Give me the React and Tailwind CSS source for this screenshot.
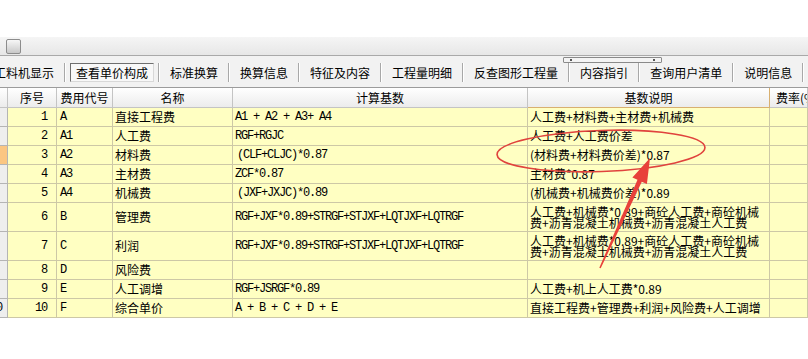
import React from "react";

const CJK = "font-['Noto_Sans_CJK_SC',sans-serif]";
const MONO = "font-['Liberation_Mono','Noto_Sans_CJK_SC',monospace] text-[12px] tracking-[-1.2px]";
const GRID = "grid grid-cols-[8px_49px_56px_120px_295px_242px_38px]";

const LONG_BASE = "RGF+JXF*0.89+STRGF+STJXF+LQTJXF+LQTRGF";
const LONG_DESC = ["人工费+机械费*0.89+商砼人工费+商砼机械", "费+沥青混凝土机械费+沥青混凝土人工费"];

const rows = [
  { n: "1", code: "A", name: "直接工程费", base: "A1 + A2 + A3+ A4", desc: "人工费+材料费+主材费+机械费" },
  { n: "2", code: "A1", name: "人工费", base: "RGF+RGJC", desc: "人工费+人工费价差" },
  { n: "3", code: "A2", name: "材料费", base: "(CLF+CLJC)*0.87", desc: "(材料费+材料费价差)*0.87", sel: true, indent: true },
  { n: "4", code: "A3", name: "主材费", base: "ZCF*0.87", desc: "主材费*0.87" },
  { n: "5", code: "A4", name: "机械费", base: "(JXF+JXJC)*0.89", desc: "(机械费+机械费价差)*0.89", indent: true },
  { n: "6", code: "B", name: "管理费", base: LONG_BASE, desc: LONG_DESC, tall: true },
  { n: "7", code: "C", name: "利润", base: LONG_BASE, desc: LONG_DESC, tall: true },
  { n: "8", code: "D", name: "风险费", base: "", desc: "" },
  { n: "9", code: "E", name: "人工调增", base: "RGF+JSRGF*0.89", desc: "人工费+机上人工费*0.89" },
  { n: "10", code: "F", name: "综合单价", base: "A + B + C + D + E", desc: "直接工程费+管理费+利润+风险费+人工调增", last: true },
];

const tools = ["工料机显示", "查看单价构成", "标准换算", "换算信息", "特征及内容", "工程量明细", "反查图形工程量", "内容指引", "查询用户清单", "说明信息"];

function Sep() {
  return <div className="h-[19px] w-[2px] border-l border-l-[#a8a8a8] border-r border-r-white shrink-0" />;
}

function Toolbar() {
  return (
    <div className={`relative h-[32px] bg-[#f2f2f2] border-b border-[#9c9c9c] flex items-center overflow-hidden ${CJK} text-[12px] text-black`}>
      <div className="flex items-center ml-[-16px] pt-[2px]">
        {tools.map((t, i) => (
          <React.Fragment key={t}>
            {i === 1 ? (
              <div className="mx-[4px] shrink-0 h-[19px] px-[5px] flex items-center border border-t-[#6e6e6e] border-l-[#6e6e6e] border-b-[#d8d8d8] border-r-[#d8d8d8] bg-[#f8f8f8] leading-none whitespace-nowrap">
                {t}
              </div>
            ) : (
              <div className="px-[10px] shrink-0 leading-none whitespace-nowrap">{t}</div>
            )}
            <Sep />
          </React.Fragment>
        ))}
      </div>
      <div className="absolute left-[563px] top-[1px] w-[99px] h-[6px] border border-[#8a8a8a] rounded-[1px] bg-[#f4f4f4] flex items-center justify-between px-[6px]">
        <div className="w-[2px] h-[2px] bg-[#555]" />
        <div className="w-[2px] h-[2px] bg-[#555]" />
      </div>
    </div>
  );
}

function HeaderRow() {
  const hc = "h-[20px] border-r border-b border-[#c4c4c4] flex items-center justify-center overflow-hidden whitespace-nowrap bg-[linear-gradient(#ffffff,#ececec)]";
  return (
    <div className={`${GRID} ${CJK} text-[12px] text-black`}>
      <div className={hc} />
      <div className={hc}>序号</div>
      <div className={hc}>费用代号</div>
      <div className={hc}>名称</div>
      <div className={hc}>计算基数</div>
      <div className={`${hc} bg-[linear-gradient(#fce6ad,#f4c363)] border-[#d8b070]`}>基数说明</div>
      <div className={`${hc} justify-start pl-[6px]`}>费率(%)</div>
    </div>
  );
}

function DataRow({ r }) {
  const h = r.tall ? "h-[29px]" : "h-[19px]";
  const c = `${h} border-r border-b border-[#cdc8a6] flex items-center overflow-hidden whitespace-nowrap bg-[#ffffc2]`;
  return (
    <div className={`${GRID} text-black`}>
      <div className={`${h} border-r border-b border-[#b4b4b4] flex items-center justify-end overflow-hidden ${r.sel ? "bg-[#fbc682]" : "bg-[#eeeeee]"} ${MONO}`}>
        {r.last ? <span className="pr-[5px]">10</span> : null}
      </div>
      <div className={`${c} justify-end pr-[9px] ${MONO}`}>{r.n}</div>
      <div className={`${c} pl-[3px] ${MONO}`}>{r.code}</div>
      <div className={`${c} pl-[2px] ${CJK} text-[12px]`}>{r.name}</div>
      <div className={`${c} ${r.indent ? "pl-[4px]" : "pl-[2px]"} ${MONO}`}>{r.base}</div>
      <div className={`${c} pl-[2px] ${CJK} text-[12px] ${r.sel ? "bg-[#e3f2d9]" : ""}`}>
        {Array.isArray(r.desc) ? (
          <div className="leading-[11px]">
            <div>{r.desc[0]}</div>
            <div>{r.desc[1]}</div>
          </div>
        ) : (
          r.desc
        )}
      </div>
      <div className={c} />
    </div>
  );
}

function Overlay() {
  const tail = [600, 268];
  const tip = [650, 158];
  const dx = tip[0] - tail[0];
  const dy = tip[1] - tail[1];
  const len = Math.hypot(dx, dy);
  const ux = dx / len;
  const uy = dy / len;
  const px = -uy;
  const py = ux;
  const headLen = 25;
  const base = [tip[0] - ux * headLen, tip[1] - uy * headLen];
  const hw = 8;
  const sw0 = 0.8;
  const sw1 = 2.4;
  const pts = [
    [tail[0] + px * sw0, tail[1] + py * sw0],
    [base[0] + px * sw1, base[1] + py * sw1],
    [base[0] + px * hw, base[1] + py * hw],
    tip,
    [base[0] - px * hw, base[1] - py * hw],
    [base[0] - px * sw1, base[1] - py * sw1],
    [tail[0] - px * sw0, tail[1] - py * sw0],
  ]
    .map((p) => p.map((v) => v.toFixed(1)).join(","))
    .join(" ");
  return (
    <svg className="absolute inset-0 pointer-events-none" width="808" height="359" viewBox="0 0 808 359">
      <ellipse cx="601" cy="151" rx="104" ry="20.5" transform="rotate(-2 601 151)" fill="none" stroke="#e0433d" strokeWidth="1.6" />
      <polygon points={pts} fill="#e8413a" />
    </svg>
  );
}

export default function App() {
  return (
    <div className="relative w-[808px] h-[359px] overflow-hidden bg-white">
      <div className="h-[37px] bg-white" />
      <div className="h-[19px] bg-[linear-gradient(#f5f5f5,#e7e7e7)] border-b border-[#a9a9a9] flex items-center pl-[6px]">
        <div className="w-[15px] h-[15px] border border-[#8c8c8c] rounded-[2px] bg-[linear-gradient(#f7f7f7,#c9c9c9)]" />
      </div>
      <Toolbar />
      <HeaderRow />
      {rows.map((r) => (
        <DataRow key={r.n} r={r} />
      ))}
      <Overlay />
    </div>
  );
}
